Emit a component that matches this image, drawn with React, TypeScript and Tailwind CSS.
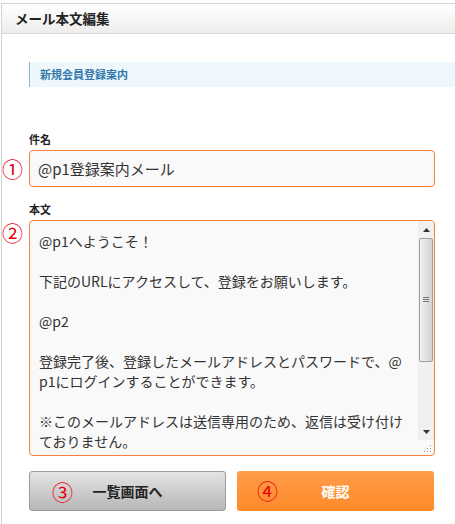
import React from 'react';

const FONT = { fontFamily: '"Noto Sans CJK JP", "Noto Sans", sans-serif' };

const bodyLines = [
    '@p1へようこそ！',
    '',
    '下記のURLにアクセスして、登録をお願いします。',
    '',
    '@p2',
    '',
    '登録完了後、登録したメールアドレスとパスワードで、@',
    'p1にログインすることができます。',
    '',
    '※このメールアドレスは送信専用のため、返信は受け付け',
    'ておりません。',
];

function Mark({ children, className }: { children: string; className: string }) {
    return (
        <span
            className={`absolute text-[21px] leading-none text-[#e8000b] ${className}`}
        >
            {children}
        </span>
    );
}

function Arrow({ up }: { up?: boolean }) {
    return (
        <div className="h-[17px] flex items-center justify-center bg-[#f0f0f0]">
            <svg width="7" height="4" viewBox="0 0 7 4">
                {up ? (
                    <polygon points="3.5,0 7,4 0,4" fill="#333" />
                ) : (
                    <polygon points="0,0 7,0 3.5,4" fill="#333" />
                )}
            </svg>
        </div>
    );
}

function ScrollBar() {
    return (
        <div className="w-[16px] flex flex-col shrink-0">
            <Arrow up />
            <div className="flex-1 bg-[#f0f0f0] px-[1px]">
                <div className="h-[124px] rounded-[2px] border border-[#9e9e9e] bg-linear-to-r from-[#f2f2f2] to-[#d2d2d2] flex items-center justify-center">
                    <svg width="6" height="6" viewBox="0 0 6 6">
                        <line x1="0" y1="0.5" x2="6" y2="0.5" stroke="#777" />
                        <line x1="0" y1="2.5" x2="6" y2="2.5" stroke="#777" />
                        <line x1="0" y1="4.5" x2="6" y2="4.5" stroke="#777" />
                    </svg>
                </div>
            </div>
            <Arrow />
            <div className="h-[15px] flex items-end justify-end pr-[2px] pb-[2px]">
                <svg width="9" height="9" viewBox="0 0 9 9">
                    <rect x="7" y="1" width="1" height="1" fill="#999" />
                    <rect x="4" y="4" width="1" height="1" fill="#999" />
                    <rect x="7" y="4" width="1" height="1" fill="#999" />
                    <rect x="1" y="7" width="1" height="1" fill="#999" />
                    <rect x="4" y="7" width="1" height="1" fill="#999" />
                    <rect x="7" y="7" width="1" height="1" fill="#999" />
                </svg>
            </div>
        </div>
    );
}

export default function App() {
    return (
        <div className="w-[455px] h-[524px] overflow-hidden bg-white pt-[3px] pl-[1px]" style={FONT}>
            <div className="border-l border-t border-[#d3d3d3] h-full">
                <div className="h-[30px] border-b border-[#d6d6d6] bg-linear-to-b from-white to-[#eeedeb] flex items-center pl-[13px]">
                    <h1 className="text-[13.5px] font-bold text-[#222]">メール本文編集</h1>
                </div>

                <div className="pl-[27px] pr-[20px]">
                    <div className="mt-[28px] -mr-[21px] h-[25px] border-l border-[#8fb4cc] bg-[#eef7fb] flex items-center pl-[10px]">
                        <span className="text-[11px] font-bold text-[#3479ad]">新規会員登録案内</span>
                    </div>

                    <p className="mt-[45px] h-[14px] text-[11px] leading-[14px] font-bold text-[#222]">件名</p>
                    <div className="relative mt-[4px]">
                        <Mark className="-left-[27px] top-[8px]">①</Mark>
                        <input
                            readOnly
                            value="@p1登録案内メール"
                            className="w-full h-[37px] rounded-[4px] border border-[#f47f3e] bg-[#f9f9f9] px-[8px] text-[15px] text-[#333] outline-none"
                            style={FONT}
                        />
                    </div>

                    <p className="mt-[15px] h-[14px] text-[11px] leading-[14px] font-bold text-[#222]">本文</p>
                    <div className="relative mt-[4px]">
                        <Mark className="-left-[27px] top-[2px]">②</Mark>
                        <div className="h-[236px] rounded-[4px] border border-[#f47f3e] bg-[#f9f9f9] flex overflow-hidden">
                            <div className="flex-1 pl-[9px] pt-[10px] text-[14px] leading-[20px] text-[#333] whitespace-pre">
                                {bodyLines.map((line, i) => (
                                    <div key={i} className="h-[20px]">
                                        {line}
                                    </div>
                                ))}
                            </div>
                            <ScrollBar />
                        </div>
                    </div>

                    <div className="mt-[15px] flex gap-[11px]">
                        <button className="relative w-[197px] h-[40px] rounded-[3px] border border-[#9c9c9c] bg-linear-to-b from-[#e4e4e4] to-[#b7b7b7] text-[14px] font-bold text-[#222]">
                            <Mark className="left-[22px] top-[9px] font-normal">③</Mark>
                            一覧画面へ
                        </button>
                        <button className="relative w-[197px] h-[40px] rounded-[3px] bg-linear-to-b from-[#ff9c48] to-[#fd8a27] text-[14px] font-bold text-white">
                            <Mark className="left-[20px] top-[9px] font-normal">④</Mark>
                            確認
                        </button>
                    </div>
                </div>
            </div>
        </div>
    );
}
